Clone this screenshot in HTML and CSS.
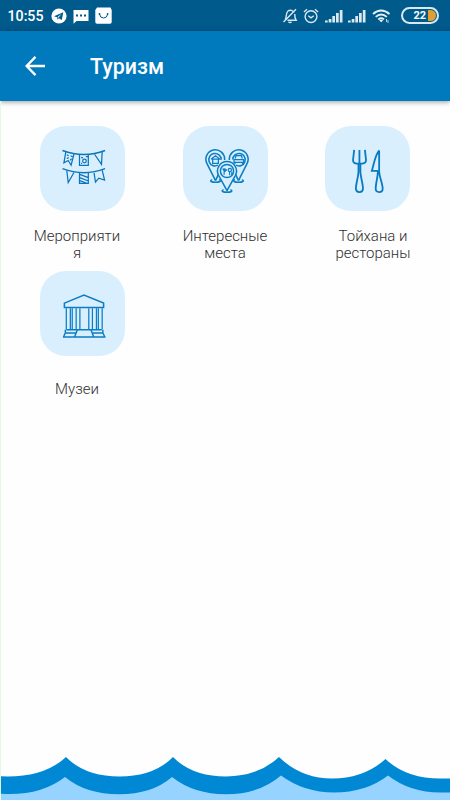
FILE: index.html
```html
<!DOCTYPE html>
<html lang="ru">
<head>
  <meta charset="UTF-8">
  <meta name="viewport" content="width=device-width, initial-scale=1.0">
  <title>Туризм</title>
  <link rel="stylesheet" href="styles.css">
</head>
<body>
  <!-- Статус-бар -->
  <div class="status">
    <span class="time">10:55</span>
    <svg class="ic-telegram" width="16" height="16" viewBox="0 0 16 16">
      <circle cx="8" cy="8" r="7.6" fill="#fff"/>
      <path d="M3 8.2 12.3 4.2 10.8 12 7.8 10.2 6.5 11.6 6.1 9.3Z" fill="#005a8b"/>
      <path d="M6.3 9.2 10.6 5.8 7.5 9.7" fill="#fff"/>
    </svg>
    <svg class="ic-sms" width="16" height="14" viewBox="0 0 16 14">
      <path d="M.5 0H15.5V11H3.5L.5 13.7V0Z" fill="#fff"/>
      <path d="M3 4.5h2v2H3zM7 4.5h2v2H7zM11 4.5h2v2h-2z" fill="#005a8b"/>
    </svg>
    <svg class="ic-bag" width="17" height="17" viewBox="0 0 17 17">
      <path d="M2 .5H15.5L16.7 3V15Q16.7 16.7 15 16.7H2Q.3 16.7.3 15V3Z" fill="#fff"/>
      <path d="M4.5 7.2Q5 11 8.6 11T12.6 7.2" fill="none" stroke="#005a8b"/>
      <circle cx="4.5" cy="7" r=".9" fill="#005a8b"/>
      <circle cx="12.6" cy="7" r=".9" fill="#005a8b"/>
    </svg>
    <div class="status-right">
      <svg width="16" height="16" viewBox="0 0 16 16" fill="none" stroke="#d9e8f1" stroke-width="1.4">
        <path d="M3.2 11.5C5 9 3.5 5 6 3 8 1.5 11 2.3 12 4.5M12.8 6C12.6 9 13 10.5 14.2 12.3H5.5M6.5 13.8Q8 15.5 9.5 13.8M1.5 14 14 1.2"/>
      </svg>
      <svg width="16" height="16" viewBox="0 0 16 16" fill="none" stroke="#d9e8f1" stroke-width="1.4">
        <circle cx="8" cy="8.6" r="5.9"/>
        <path d="M5.3 7.8 8 9.8 10.8 7.8M.9 4 4 1.3M15.1 4 12 1.3"/>
      </svg>
      <svg class="signal" width="18" height="14" viewBox="0 0 18 14" fill="#d9e8f1">
        <path d="M0 11.500h2.700V13.500H0zM3.700 10h2.700v3.500H3.700zM7.300 7h2.700V13.500H7.300zM11 4h2.700v9.500H11zM14.800 1h2.700v12.500h-2.700z"/>
      </svg>
      <svg class="signal" width="18" height="14" viewBox="0 0 18 14" fill="#d9e8f1">
        <path d="M0 11.500h2.700V13.500H0zM3.700 10h2.700v3.500H3.700zM7.300 7h2.700V13.500H7.300zM11 4h2.700v9.500H11zM14.800 1h2.700v12.500h-2.700z"/>
      </svg>
      <svg class="wifi" width="19" height="15" viewBox="0 0 19 15" fill="none" stroke="#e6f0f6" stroke-width="1.9">
        <path d="M1 5Q9 -2 17.5 5M3.7 7.9Q9.2 3 14.8 7.9M6.3 10.4Q9.2 8 12 10.4"/>
        <path d="M7.2 11.4Q9.2 10 11.2 11.4L9.2 13.3Z" fill="#e6f0f6" stroke="none"/>
        <path d="M14.5 10v3M16 11v3" stroke-width=".8"/>
      </svg>
      <div class="battery"><span>22</span><i></i></div>
    </div>
  </div>

  <!-- Шапка -->
  <header>
    <svg width="20" height="20" viewBox="0 0 20 20" fill="none" stroke="#fff" stroke-width="2.3">
      <path d="M20 10H2M10.5 .9 1.6 10 10.5 19.1"/>
    </svg>
    <h1>Туризм</h1>
  </header>

  <!-- Разделы -->
  <main>
    <div class="tiles">
      <div class="tile">
        <svg width="44" height="44" viewBox="0 0 46 46" fill="none" stroke="#0b75bc" stroke-width="1.3">
          <path stroke-width="1.6" d="M.5 1.5Q23 10 45 1.500M.5 20.500Q23 29 45 20.500"/>
          <path d="M4 3 2 14.500 6.500 12 9.500 17 12.500 5.500M5 6l2 1M9 7l2 1M5 10l2-1M8.500 12l1.500-2"/>
          <path d="M18.300 6V17H27.500V6M20 9h2M25 8h2M20 15h1"/>
          <circle cx="23.500" cy="12.500" r="1.900"/>
          <path d="M34 5.500 41.300 16 42 3M5 22.500 6.500 35 12.500 24.500"/>
          <path d="M18.300 25V36H27.500V25M18.500 26.500 27.500 30M18.500 30 27.500 33.500M18.500 33 26 35.800"/>
          <path d="M33.500 25 35 34.500 38.500 30.500 44.500 32.500 42 22"/>
        </svg>
      </div>
      <div class="tile">
        <svg width="44" height="44" viewBox="0 0 46 46" fill="none" stroke="#0b7dc4" stroke-width="1.6">
          <!-- левая и правая метки -->
          <path d="M11 33 2.200 15.500A9.800 9.800 0 1 1 20.500 11.500M11 33 14.500 25.500M35 33 43.800 15.500A9.800 9.800 0 1 0 25.500 11.500M35 33 31.500 25.500"/>
          <path d="M13.500 16.900A6.500 6.500 0 1 1 17 11M32.500 16.900A6.500 6.500 0 1 0 29 11"/>
          <path d="M7.500 32C4 33.500 7 34.800 11 34.800S18 33.500 14.500 32M38.500 32C42 33.500 39 34.800 35 34.800S28 33.500 31.500 32"/>
          <path stroke-width="1.3" d="M6.500 10.500 11 7 15.500 10.500H6.500M8 10.500V15H14V10.500"/>
          <path stroke-width="1.3" d="M31.500 10 32.500 7H38L39 10M30.300 11H40.300V14H30.300ZM31.300 14v2M39.300 14v2"/>
          <!-- центральная метка -->
          <path d="M23 43.500 14.200 27.500A9.900 9.900 0 1 1 31.800 27.500Z" fill="#d9effe"/>
          <circle cx="23" cy="23" r="6.900"/>
          <path stroke-width="1.2" d="M18.500 20.500 20 23 21.500 20.500M20 20v7M23 21.500 20 24M25.700 24v3.500M28 24v3.500"/>
          <circle cx="26" cy="22" r="1.700" stroke-width="1.200"/>
          <path d="M19.500 42.500C16 44 19 45.200 23 45.200S30 44 26.500 42.500"/>
        </svg>
      </div>
      <div class="tile">
        <svg width="44" height="44" viewBox="0 0 46 46" fill="none" stroke="#087bc2" stroke-width="1.900">
          <path d="M7.500 1 6.300 11.500Q6.300 15.200 10.500 15.200H15.300Q19.900 15.200 19.900 11.500L18.700 1M13 1V15"/>
          <path d="M12 15.500V23C12 29 9.300 36 9.300 41.500Q9.500 45 13 45T16.700 41.500C16.700 36 14 29 14 23V15.500"/>
          <path d="M33.800 1.500C29.500 6 28.500 14 26 22.800H32.500M33.600 1.500V23C33.600 29 37.300 36 37.300 41.500Q37.300 45 33.600 45T30 41.500C30 36 32.300 29 32.300 23"/>
        </svg>
      </div>
      <div class="tile">
        <svg width="44" height="44" viewBox="0 0 46 46" fill="none" stroke="#0b7dc4" stroke-width="1.300">
          <path d="M2.500 9.500 23 1.200 43.500 9.500V14.200H2.500Z" stroke-width="1.600"/>
          <path d="M4.500 15V37M8.700 15V37M10.700 15V37M14.800 15V37M18.700 15V37M28 15V37M31.800 15V37M36 15V37M38 15V37M42 15V37"/>
          <path d="M4.500 37.400H41.500M3.500 40.800H14.500M31.500 40.800H43M1 45H45.500M16 37.500 13.300 44.500M30.300 37.500 33 44.500M3.500 37.500V40.500L1.800 44.500M42.700 37.500V40.500L44.500 44.500" stroke-width="1.500"/>
        </svg>
      </div>
    </div>
    <div class="labels">
      <p><span>Мероприяти<br>я</span></p>
      <p><span>Интересные<br>места</span></p>
      <p><span>Тойхана и<br>рестораны</span></p>
      <p><span>Музеи</span></p>
    </div>
  </main>

  <!-- Волны внизу -->
  <svg class="waves" width="450" height="46" viewBox="1 0 449 46" preserveAspectRatio="none">
    <path fill="#0088d5" d="M0 22.300Q43 24.500 66 3Q85 22.500 119.500 22.500T173 3Q192 22.500 226 22.500Q258 22.500 279 3Q301 24.500 332 24.500Q364 24.500 385.500 5Q406 24.500 440 24.500H450V46H0Z"/>
    <path fill="#96d4ff" d="M0 39.700Q40 42.500 65 23Q86 40.300 119 40.300T172 23Q194 40.300 226 40.300Q259 40.300 281 21.500Q304 38.500 334 38.500Q366 38.500 388 21.500Q410 38.500 440 38.500H450V46H0Z"/>
  </svg>
</body>
</html>
```
FILE: styles.css
```css
:root {
  --status: #005a8b;
  --primary: #007abd;
  --tile: #d9effe;
  --text: #303030;
}
* { box-sizing: border-box; }
body {
  margin: 0;
  height: 800px;
  background: #fefefe;
  font-family: Roboto, sans-serif;
  color: var(--text);
  display: flex;
  flex-direction: column;
  overflow: hidden;
}
.status {
  height: 31px;
  padding-left: 7.5px;
  background: var(--status);
  color: #fff;
  display: flex;
  align-items: center;
  flex-shrink: 0;
}
.time {
  width: 43px;
  font-size: 14.2px;
  font-weight: 500;
  line-height: 31px;
  padding-top: 2px;
}
.ic-telegram { margin-top: 1px; }
.ic-sms { margin: 3px 0 0 6.5px; }
.ic-bag { margin-left: 6px; }
.status-right {
  margin-left: auto;
  padding-right: 11px;
  display: flex;
  align-items: center;
  gap: 5.5px;
}
.wifi { margin-top: 1px; }
.battery {
  width: 38px;
  height: 17px;
  margin-left: 5px;
  border: 2px solid #d9e8f1;
  border-radius: 9px;
  display: flex;
  align-items: center;
  justify-content: flex-end;
  gap: 2px;
  padding-right: 1px;
  font-size: 11px;
  font-weight: 700;
}
.battery i {
  width: 8px;
  height: 11px;
  background: #e0a030;
  border-radius: 0 6px 6px 0;
}
header {
  height: 70px;
  padding-left: 25px;
  background: var(--primary);
  box-shadow: 0 1px 5px rgba(0, 0, 0, 0.4);
  display: flex;
  align-items: center;
  gap: 45px;
  flex-shrink: 0;
}
h1 {
  margin: 0;
  color: #fff;
  font-size: 21.4px;
  font-weight: 500;
}
main {
  flex: 1;
  padding: 25px 1px 0 0;
  border-left: 1px solid #e2fbe4;
  display: grid;
  grid-template-columns: 100%;
  align-content: start;
}
/* иконки и подписи идут с разным шагом колонок */
.tiles, .labels {
  grid-area: 1 / 1;
  display: grid;
  grid-auto-rows: 145px;
  justify-content: center;
  justify-items: center;
}
.tiles { grid-template-columns: repeat(3, 142.5px); }
.labels { grid-template-columns: repeat(3, 148px); }
.tile {
  width: 85px;
  height: 85px;
  background: var(--tile);
  border-radius: 26px;
  display: flex;
  align-items: center;
  justify-content: center;
  padding: 4px 0 0 3px;
}
.labels p {
  width: 100%;
  margin: 0;
  padding-top: 93px;
  display: flex;
  align-items: center;
  justify-content: center;
  text-align: center;
  font-size: 15px;
  font-weight: 300;
  line-height: 17.5px;
}
.waves {
  display: block;
  border-left: 1px solid #e2fbe4;
  flex-shrink: 0;
}
```
